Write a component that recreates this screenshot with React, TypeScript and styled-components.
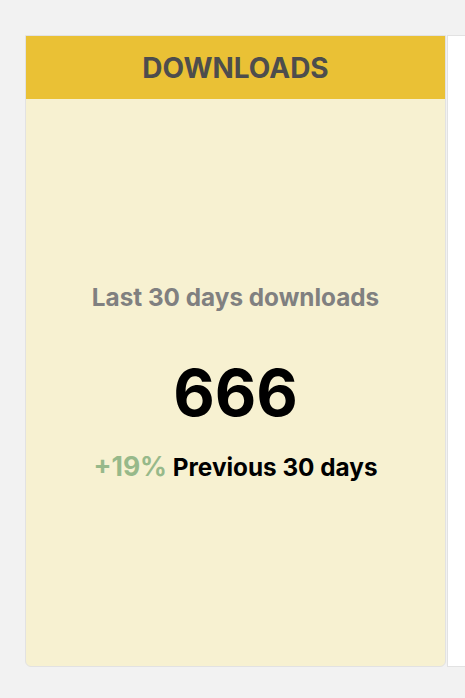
import styled, { createGlobalStyle } from "styled-components";

const GlobalStyle = createGlobalStyle`
  html, body {
    margin: 0;
    padding: 0;
    background: #f2f2f2;
    font-family: Inter, "Noto Sans", sans-serif;
  }
`;

export default function App() {
  return (
    <>
      <GlobalStyle />
      <Page>
        <Card>
          <Header>DOWNLOADS</Header>
          <Body>
            <Label>Last 30 days downloads</Label>
            <Count>666</Count>
            <Compare>
              <Change up>+19%</Change> Previous 30 days
            </Compare>
          </Body>
        </Card>
        <NextCard />
      </Page>
    </>
  );
}

const Page = styled.main`
  display: flex;
  padding: 35px 0 0 25px;
  height: 698px;
  box-sizing: border-box;
  overflow: hidden;
`;

const Card = styled.section`
  flex: 0 0 421px;
  height: 632px;
  box-sizing: border-box;
  display: flex;
  flex-direction: column;
  border: 1px solid #e2e2e2;
  border-radius: 0 0 6px 6px;
  background: #f7f1d1;
  overflow: hidden;
`;

const Header = styled.h2`
  margin: 0;
  height: 63px;
  display: flex;
  align-items: center;
  justify-content: center;
  background: #eac135;
  color: #4d4d4d;
  font-size: 28px;
  font-weight: 700;
`;

const Body = styled.div`
  flex: 1;
  display: flex;
  flex-direction: column;
  align-items: center;
  justify-content: center;
`;

const Label = styled.p`
  margin: 0;
  line-height: 29px;
  color: #808080;
  font-size: 24.3px;
  font-weight: 700;
`;

const Count = styled.div`
  margin-top: 42px;
  line-height: 77px;
  font-size: 64px;
  font-weight: 700;
  color: #000;
`;

const Compare = styled.p`
  margin: 20px 0 0;
  line-height: 31px;
  color: #000;
  font-size: 24.3px;
  font-weight: 700;
`;

const Change = styled.span<{ up?: boolean }>`
  font-size: 26.5px;
  font-weight: 700;
  color: ${(p) => (p.up ? "#97b98a" : "#d9534f")};
`;

const NextCard = styled.div`
  flex: 1;
  height: 632px;
  margin-left: 1px;
  box-sizing: border-box;
  background: #ffffff;
  border-top: 1px solid #e2e2e2;
  border-left: 1px solid #e2e2e2;
  border-bottom: 1px solid #e2e2e2;
`;
